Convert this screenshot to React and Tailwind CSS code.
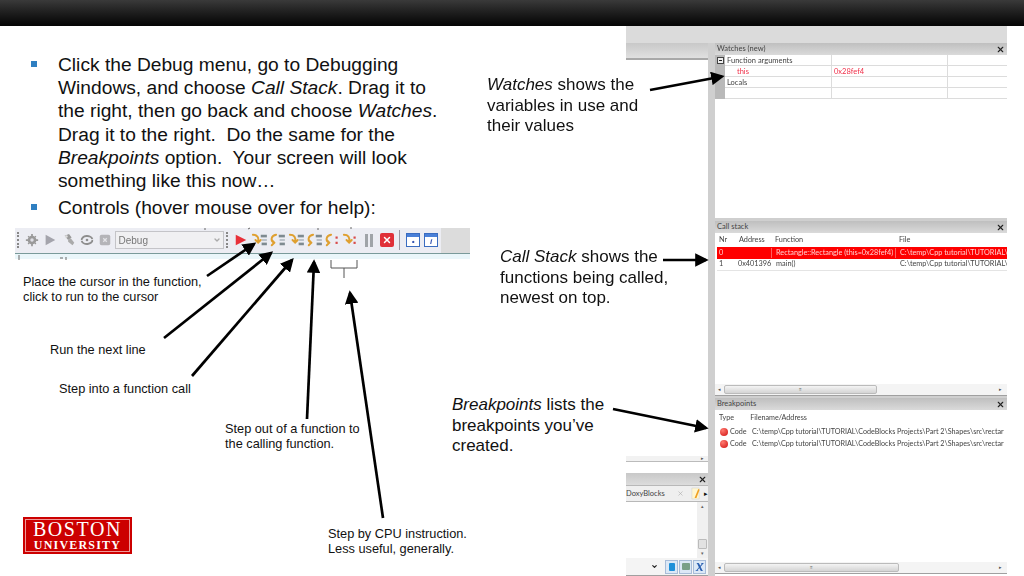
import { X, ChevronDown } from "lucide-react";

const BODY = "font-['Liberation_Sans',Arial,sans-serif]";
const IDE = "font-['Lato',sans-serif]";

function CloseX({ className = "" }) {
  return <X className={`h-[9px] w-[9px] text-[#222] ${className}`} strokeWidth={3} />;
}

function PanelHeader({ title }) {
  return (
    <div className="flex h-3 items-center justify-between bg-gradient-to-b from-[#bfbfbf] to-[#dadada] pl-0.5 pr-[2px] text-[7.5px] text-[#444]">
      <span>{title}</span>
      <CloseX />
    </div>
  );
}

function HScroll({ thumb }) {
  return (
    <div className="flex h-3 shrink-0 items-center border-b border-[#a0a0a0] bg-[#f4f4f4] pl-[3px] pr-[5px] text-[5px] text-[#555]">
      <span>◂</span>
      <div className={`ml-[3px] flex h-[9px] items-center justify-center rounded-[2px] border border-[#bbb] bg-gradient-to-b from-[#f4f4f4] to-[#d4d4d4] ${thumb}`}>
        <span className="text-[5px]">≡</span>
      </div>
      <span className="ml-auto">▸</span>
    </div>
  );
}

function Watches() {
  const rows = [
    { name: "Function arguments", indent: false },
    { name: "this", value: "0x28fef4", red: true, indent: true },
    { name: "Locals", indent: false },
    { name: "", indent: false },
  ];
  return (
    <div className="relative flex">
      <div className="flex w-2.5 justify-center bg-[#b9b9b9] pt-[2px]">
        <div className="flex h-[7px] w-[7px] items-center justify-center border border-[#444] bg-[#eee]">
          <span className="h-px w-[3px] bg-[#222]" />
        </div>
      </div>
      <div className="flex-1">
        {rows.map((r, i) => (
          <div key={i} className={`grid h-[11px] grid-cols-[107px_116px_1fr] border-b border-[#dcdcdc] text-[7.5px] leading-[11px] ${r.red ? "text-[#f0304a]" : "text-[#444]"}`}>
            <div className={`border-r border-[#dcdcdc] ${r.indent ? "pl-3" : "pl-0.5"}`}>{r.name}</div>
            <div className="border-r border-[#dcdcdc] pl-0.5">{r.value}</div>
            <div />
          </div>
        ))}
      </div>
    </div>
  );
}

function CallStack() {
  const rows = [
    { nr: "0", addr: "", fn: "Rectangle::Rectangle (this=0x28fef4)", file: "C:\\temp\\Cpp tutorial\\TUTORIAL\\", red: true },
    { nr: "1", addr: "0x401396", fn: "main()", file: "C:\\temp\\Cpp tutorial\\TUTORIAL\\" },
  ];
  const cols = "grid grid-cols-[17px_37px_124px_1fr]";
  return (
    <div className="pl-0.5 text-[7.3px] text-[#444]">
      <div className={`${cols} h-3.5 items-center`}>
        <span className="pl-0.5">Nr</span>
        <span className="pl-[5px]">Address</span>
        <span className="pl-1">Function</span>
        <span className="pl-1">File</span>
      </div>
      {rows.map((r) => (
        <div key={r.nr} className={`${cols} h-[12px] items-center overflow-hidden whitespace-nowrap ${r.red ? "bg-[#fe0000] text-[#ffd0d0]" : "border-b border-[#e4e4e4] text-[#444]"}`}>
          <span className="pl-0.5">{r.nr}</span>
          <span className="border-l border-[#ffffff60] pl-[3px]">{r.addr}</span>
          <span className="border-l border-[#ffffff60] pl-1">{r.fn}</span>
          <span className="overflow-hidden border-l border-[#ffffff60] pl-1">{r.file}</span>
        </div>
      ))}
    </div>
  );
}

function Breakpoints() {
  const path = "C:\\temp\\Cpp tutorial\\TUTORIAL\\CodeBlocks Projects\\Part 2\\Shapes\\src\\rectar";
  return (
    <div className="text-[7.2px] text-[#444]">
      <div className="flex h-4 items-center gap-4 pl-1">
        <span>Type</span>
        <span>Filename/Address</span>
      </div>
      {[0, 1].map((i) => (
        <div key={i} className="flex h-3 items-center overflow-hidden whitespace-nowrap pl-[5px]">
          <span className="h-[8px] w-[8px] shrink-0 rounded-full bg-[radial-gradient(circle_at_35%_30%,#ff7a70,#d01010)]" />
          <span className="ml-[2px] w-[22px] shrink-0">Code</span>
          <span className="overflow-hidden">{path}</span>
        </div>
      ))}
    </div>
  );
}

function LogsPane() {
  return (
    <div className="flex h-[103px] flex-col text-[7.5px] text-[#444]">
      <div className="flex h-3 items-center justify-end bg-gradient-to-b from-[#c8c8c8] to-[#dcdcdc] pr-[1px]">
        <CloseX />
      </div>
      <div className="flex h-[17px] items-center border-b border-t border-[#b8b8b8] bg-[#efefef]">
        <span>DoxyBlocks</span>
        <X className="ml-[12px] h-[7px] w-[7px] text-[#aaa]" strokeWidth={2} />
        <svg viewBox="0 0 12 14" className="ml-[6px] h-[13px] w-[11px]">
          <path d="M2 1h8v12H2z" fill="#fff6d0" stroke="#ccc" strokeWidth=".5" />
          <path d="M5 12 9 2l1.500 1L7 12z" fill="#f0a020" />
        </svg>
        <span className="ml-[3px] text-[7px] text-[#111]">▸</span>
      </div>
      <div className="flex flex-1 justify-end bg-white">
        <div className="flex w-[11px] flex-col items-center justify-between bg-[#f0f0f0] py-0.5 text-[5px] leading-none text-[#666]">
          <span>▴</span>
          <div className="mt-auto mb-0.5 h-[10px] w-[9px] rounded-[1px] border border-[#bbb] bg-[#e2e2e2]" />
          <span>▾</span>
        </div>
      </div>
      <div className="flex h-[18px] items-center justify-end gap-[1px] border-b border-[#a0a0a0] bg-[#f4f4f4] pr-0.5">
        <ChevronDown className="mr-1.5 h-[7px] w-[7px] text-[#222]" strokeWidth={4} />
        <div className="flex h-[14px] w-[13px] items-center justify-center border border-[#a8bcd8] bg-[#dce8f6]">
          <div className="h-[8px] w-[6px] rounded-[1px] bg-[#1f90d8]" />
        </div>
        <div className="flex h-[14px] w-[13px] items-center justify-center border border-[#a8bcd8] bg-[#dce8f6]">
          <div className="h-[7px] w-[8px] rounded-[1px] bg-[#7aa088]" />
        </div>
        <div className="flex h-[14px] w-[13px] items-center justify-center border border-[#a8bcd8] bg-[#dce8f6] font-serif text-[12px] font-bold italic leading-none text-[#2a5fb0]">X</div>
      </div>
    </div>
  );
}

function IdePanel() {
  return (
    <div className={`${IDE} flex h-[550px] w-[381px] shrink-0 flex-col blur-[0.35px]`}>
      <div className="h-[17px] shrink-0 bg-[#dbdbdb]" />
      <div className="flex min-h-0 flex-1">
        <div className="flex w-[82px] shrink-0 flex-col">
          <div className="h-[17px] border-b-2 border-[#a8a8a8] bg-gradient-to-b from-[#c8c8c8] to-[#e0e0e0]" />
          <div className="flex-1 bg-white" />
          <div className="flex h-1.5 items-center justify-end border-b border-[#bbb] bg-[#f2f2f2] pr-1 text-[5px] text-[#555]">▸</div>
          <div className="h-[11px] bg-white" />
          <LogsPane />
        </div>
        <div className="w-[7px] shrink-0 bg-[#cfcfcf]" />
        <div className="flex w-[292px] shrink-0 flex-col">
          <PanelHeader title="Watches (new)" />
          <Watches />
          <div className="h-[119px] bg-white" />
          <div className="h-[3px] bg-[#cfcfcf]" />
          <PanelHeader title="Call stack" />
          <CallStack />
          <div className="h-[113px] bg-white" />
          <HScroll thumb="w-[153px]" />
          <div className="h-0.5 bg-[#cfcfcf]" />
          <PanelHeader title="Breakpoints" />
          <Breakpoints />
          <div className="flex-1 bg-white" />
          <HScroll thumb="w-[175px]" />
          <div className="h-0.5 bg-white" />
        </div>
      </div>
    </div>
  );
}

function GrayIcon({ kind }) {
  return (
    <svg viewBox="0 0 16 16" className="h-[14px] w-[14px]">
      {kind === "gear" && (
        <g fill="#9a9a9a">
          <circle cx="8" cy="8" r="5" />
          <path d="M7 1h2v14H7zM1 7h14v2H1zM3 4l1-1 9 9-1 1zM12 3l1 1-9 9-1-1z" />
          <circle cx="8" cy="8" r="2" fill="#dfdfe6" />
        </g>
      )}
      {kind === "play" && <path d="M3 2l11 6-11 6z" fill="#a4a4ac" />}
      {kind === "build" && (
        <g fill="#9a9a9a">
          <path d="M3 3l5-2 3 4-4 3z" />
          <path d="M7 8l3-2 4 5-2 3-5-4z" fill="#aaa" />
          <circle cx="5" cy="4" r="1.500" fill="#ddd" />
        </g>
      )}
      {kind === "rebuild" && (
        <g fill="none" stroke="#8e8e8e" strokeWidth="2.200">
          <path d="M2 8a6 4 0 0 1 12-1" />
          <path d="M14 8a6 4 0 0 1-12 1" />
          <circle cx="8" cy="8" r="1.500" fill="#8e8e8e" stroke="none" />
        </g>
      )}
      {kind === "stop" && (
        <g>
          <rect x="2" y="2" width="12" height="12" rx="2" fill="#b4b4b8" />
          <path d="M6 6l4 4M10 6l-4 4" stroke="#e4e4e8" strokeWidth="1.500" />
        </g>
      )}
    </svg>
  );
}

// gold step arrow with grey or red code marks beside it
function StepIcon({ flip, dots }) {
  return (
    <svg viewBox="0 0 18 16" className="h-[14px] w-[16px]">
      <path
        d={flip ? "M8 2C2 3 1 9 6 11M3 8l3 3-3 3" : "M2 2c5 0 7 3 6 8M5 8l3 3 3-3"}
        fill="none"
        stroke="#dfa030"
        strokeWidth="2.200"
        strokeLinecap="round"
      />
      {dots ? (
        <g fill="#d84a4a">
          <rect x="13" y="4" width="2.500" height="2.500" />
          <rect x="13" y="10" width="2.500" height="2.500" />
        </g>
      ) : (
        <g fill="#7e8a90">
          <rect x="11" y="2" width="7" height="3" />
          <rect x="12" y="7" width="6" height="2" fill="#b4bcc4" />
          <rect x="12" y="11" width="6" height="3" />
        </g>
      )}
    </svg>
  );
}

function Grip() {
  return <div className="h-[16px] w-[2px] border-l-2 border-dotted border-[#888]" />;
}

function WinIcon({ label }) {
  return (
    <div className="flex h-[14px] w-[14px] flex-col border border-[#3a6cc0] bg-white text-center">
      <div className="h-[3px] bg-[#4a80d8]" />
      <div className="flex-1 text-[8px] font-bold italic leading-[9px] text-[#3050b0]">{label}</div>
    </div>
  );
}

function Toolbar() {
  const cell = "flex h-5 w-[18.3px] shrink-0 items-center justify-center";
  return (
    <div className="ml-[15px] w-[455px] blur-[0.3px]">
      <div className="flex h-[26px] items-center border-b border-[#7a9a9a] bg-[#dcdcdc]">
        <div className="flex h-full w-[426px] items-center bg-[#ecedf3] pl-[2px]">
          <Grip />
          <div className="ml-[4px] flex">
            <span className={cell}><GrayIcon kind="gear" /></span>
            <span className={cell}><GrayIcon kind="play" /></span>
            <span className={cell}><GrayIcon kind="build" /></span>
            <span className={cell}><GrayIcon kind="rebuild" /></span>
            <span className={cell}><GrayIcon kind="stop" /></span>
          </div>
          <div className={`${BODY} ml-[1px] flex h-[18px] w-[109px] shrink-0 items-center justify-between border border-[#c4c4c8] bg-[#f0f0f2] px-0.5 text-[10px] text-[#777]`}>
            <span>Debug</span>
            <ChevronDown className="h-[8px] w-[8px] text-[#aaa]" strokeWidth={4} />
          </div>
          <div className="ml-[2px]"><Grip /></div>
          <div className="ml-[3px] flex">
            <span className={cell}>
              <svg viewBox="0 0 16 16" className="h-[14px] w-[14px]"><path d="M2 2l12 6-12 6z" fill="#e8303a" /></svg>
            </span>
            <span className={cell}><StepIcon /></span>
            <span className={cell}><StepIcon flip /></span>
            <span className={cell}><StepIcon /></span>
            <span className={cell}><StepIcon flip /></span>
            <span className={cell}><StepIcon flip dots /></span>
            <span className={cell}><StepIcon dots /></span>
            <span className={cell}>
              <span className="flex gap-[2px]">
                <span className="h-[13px] w-[3px] bg-[#a0a4a8]" />
                <span className="h-[13px] w-[3px] bg-[#a0a4a8]" />
              </span>
            </span>
            <span className={cell}>
              <span className="flex h-[14px] w-[14px] items-center justify-center rounded-[2px] bg-[#e03038]">
                <X className="h-[10px] w-[10px] text-white" strokeWidth={3.5} />
              </span>
            </span>
          </div>
          <div className="ml-[3px] h-[20px] w-px bg-[#9a9aa4]" />
          <div className="ml-[6px] flex gap-[4px]">
            <WinIcon label="•" />
            <WinIcon label="i" />
          </div>
        </div>
      </div>
      <div className="h-[5px] bg-[#eaf6fa]" />
    </div>
  );
}

function Bullet({ children }) {
  return (
    <li className="flex">
      <span className="mt-[8px] ml-[31px] h-[6px] w-[6px] shrink-0 bg-[#2f7fc1]" />
      <div className="ml-[21px] w-[385px]">{children}</div>
    </li>
  );
}

function Logo() {
  return (
    <div className="ml-[23px] flex h-[37px] w-[109px] items-center justify-center bg-[#cc0000] p-[2px]">
      <div className="flex h-full w-full flex-col items-center justify-center border border-[#ee9a9a] font-['Liberation_Serif',serif] leading-none text-white">
        <span className="text-[20px] tracking-[1.6px]">BOSTON</span>
        <span className="text-[12px] font-bold tracking-[1.2px]">UNIVERSITY</span>
      </div>
    </div>
  );
}

function Note({ className, children }) {
  return <div className={`absolute text-[12.75px] leading-[15px] text-[#111] ${className}`}>{children}</div>;
}

function Callout({ className, children }) {
  return <div className={`absolute text-[17px] leading-[20.6px] text-[#111] ${className}`}>{children}</div>;
}

// annotation arrows drawn over the slide
const ARROWS = [
  [650, 90, 722, 76.5],
  [663, 260, 706, 260],
  [613, 409, 706, 428],
  [207, 276, 254, 244],
  [164, 338, 271, 253],
  [192, 376, 292, 260],
  [307, 419, 314, 262],
  [383, 518, 350, 293],
];

function Arrows() {
  return (
    <svg className="pointer-events-none absolute inset-0 h-[576px] w-[1024px]" viewBox="0 0 1024 576">
      <defs>
        <marker id="tip" markerWidth="5" markerHeight="5" refX="4" refY="2.500" orient="auto">
          <path d="M0 0 5 2.500 0 5z" fill="#000" />
        </marker>
      </defs>
      {ARROWS.map(([x1, y1, x2, y2], i) => (
        <line key={i} x1={x1} y1={y1} x2={x2} y2={y2} stroke="#000" strokeWidth="2.700" markerEnd="url(#tip)" />
      ))}
      <path d="M331 260v8h26v-8M344 268v10" fill="none" stroke="#555" strokeWidth="1" />
      {/* cropped scraps of the slide's screenshot along the toolbar edges */}
      <path d="M204 229h2M248 229l2-1M317 229h2M351 227v2M19 255v5M60 258h3M66 257v3" fill="none" stroke="#666" strokeWidth="1" />
    </svg>
  );
}

export default function App() {
  return (
    <div className={`${BODY} relative h-[576px] w-[1024px] overflow-hidden bg-white text-[#111]`}>
      <div className="h-[26px] bg-gradient-to-b from-[#3a3a3a] to-[#050505]" />
      <div className="flex h-[550px]">
        <div className="flex w-[626px] shrink-0 flex-col">
          <ul className="flex flex-col gap-[3.500px] pt-[27px] text-[19.2px] leading-[23.200px]">
            <Bullet>
              Click the Debug menu, go to Debugging Windows, and choose <i>Call Stack</i>. Drag it to the right, then go back and choose <i>Watches</i>. Drag it to the right.&nbsp; Do the same for the <i>Breakpoints</i> option.&nbsp; Your screen will look something like this now…
            </Bullet>
            <Bullet>Controls (hover mouse over for help):</Bullet>
          </ul>
          <div className="mt-[9px]">
            <Toolbar />
          </div>
          <div className="mt-[258px]">
            <Logo />
          </div>
        </div>
        <IdePanel />
      </div>

      <Note className="left-[23px] top-[274px] w-[190px]">Place the cursor in the function, click to run to the cursor</Note>
      <Note className="left-[50px] top-[342px]">Run the next line</Note>
      <Note className="left-[59px] top-[381px]">Step into a function call</Note>
      <Note className="left-[225px] top-[421px] w-[145px]">Step out of a function to the calling function.</Note>
      <Note className="left-[328px] top-[526px] w-[150px]">Step by CPU instruction. Less useful, generally.</Note>

      <Callout className="left-[487px] top-[75px] w-[160px]"><i>Watches</i> shows the variables in use and their values</Callout>
      <Callout className="left-[500px] top-[247px] w-[175px]"><i>Call Stack</i> shows the functions being called, newest on top.</Callout>
      <Callout className="left-[452px] top-[395px] w-[160px]"><i>Breakpoints</i> lists the breakpoints you’ve created.</Callout>

      <Arrows />
    </div>
  );
}
